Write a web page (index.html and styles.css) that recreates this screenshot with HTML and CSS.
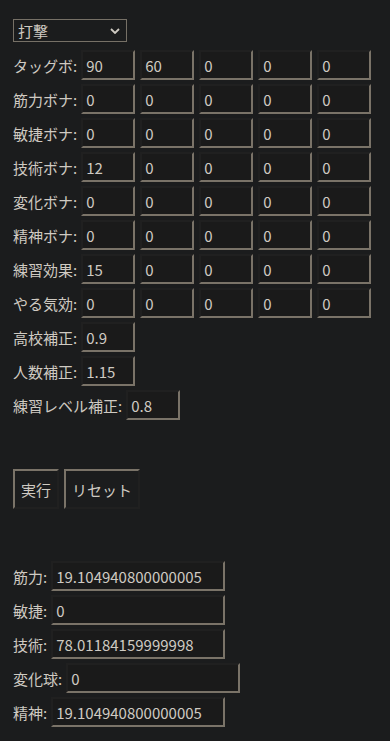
FILE: index.html
```html
<!DOCTYPE html>
<html lang="ja">

<head>
    <meta charset="UTF-8">
    <meta name="viewport" content="width=device-width, initial-scale=1.0">
    <title>練習計算</title>
    <link rel="stylesheet" href="styles.css">
</head>

<body>
    <div class="calc">
        <div class="type-select">
            <select id="type">
                <option>打撃</option>
                <option>投手</option>
            </select>
            <svg class="chevron" width="10" height="6" viewBox="0 0 10 6">
                <path d="M1 1 L5 5 L9 1" fill="none" stroke="#cfcac2" stroke-width="1.8" />
            </svg>
        </div>

        <div class="inputs">
            <div class="row">タッグボ:<input type="text" value="90"><input type="text" value="60"><input type="text" value="0"><input type="text" value="0"><input type="text" value="0"></div>
            <div class="row">筋力ボナ:<input type="text" value="0"><input type="text" value="0"><input type="text" value="0"><input type="text" value="0"><input type="text" value="0"></div>
            <div class="row">敏捷ボナ:<input type="text" value="0"><input type="text" value="0"><input type="text" value="0"><input type="text" value="0"><input type="text" value="0"></div>
            <div class="row">技術ボナ:<input type="text" value="12"><input type="text" value="0"><input type="text" value="0"><input type="text" value="0"><input type="text" value="0"></div>
            <div class="row">変化ボナ:<input type="text" value="0"><input type="text" value="0"><input type="text" value="0"><input type="text" value="0"><input type="text" value="0"></div>
            <div class="row">精神ボナ:<input type="text" value="0"><input type="text" value="0"><input type="text" value="0"><input type="text" value="0"><input type="text" value="0"></div>
            <div class="row">練習効果:<input type="text" value="15"><input type="text" value="0"><input type="text" value="0"><input type="text" value="0"><input type="text" value="0"></div>
            <div class="row">やる気効:<input type="text" value="0"><input type="text" value="0"><input type="text" value="0"><input type="text" value="0"><input type="text" value="0"></div>
            <div class="row">高校補正:<input type="text" value="0.9"></div>
            <div class="row">人数補正:<input type="text" value="1.15"></div>
            <div class="row">練習レベル補正:<input type="text" value="0.8"></div>
        </div>

        <div class="buttons">
            <button type="button">実行</button>
            <button type="button">リセット</button>
        </div>

        <div class="results">
            <div class="row">筋力:<input class="out" type="text" value="19.104940800000005" readonly></div>
            <div class="row">敏捷:<input class="out" type="text" value="0" readonly></div>
            <div class="row">技術:<input class="out" type="text" value="78.01184159999998" readonly></div>
            <div class="row">変化球:<input class="out" type="text" value="0" readonly></div>
            <div class="row">精神:<input class="out" type="text" value="19.104940800000005" readonly></div>
        </div>
    </div>
</body>

</html>
```

FILE: styles.css
```css
body {
    margin: 0;
    background-color: #1b1c1d;
    color: #cfcac2;
    font-family: "Noto Sans CJK JP", "Noto Sans", sans-serif;
    font-size: 15px;
}

.calc {
    padding: 19px 13px 0 13px;
}

.type-select {
    position: relative;
    width: 114px;
    margin-bottom: 8px;
}

select {
    appearance: none;
    width: 114px;
    height: 23px;
    padding: 0 0 0 4px;
    background-color: #1b1c1d;
    color: #cfcac2;
    border: 1px solid #767066;
    border-radius: 0;
    font-family: inherit;
    font-size: 15px;
}

.chevron {
    position: absolute;
    right: 7px;
    top: 9px;
    pointer-events: none;
}

.row {
    display: flex;
    align-items: center;
    gap: 5px;
    height: 30px;
    margin-bottom: 4px;
}

input[type="text"] {
    box-sizing: border-box;
    width: 54px;
    height: 30px;
    padding: 0 3px;
    background-color: #1a1a1a;
    color: #cfcac2;
    border: 2px solid;
    border-color: #202020 #7a7368 #7a7368 #202020;
    font-family: inherit;
    font-size: 15px;
}

.row input:first-of-type {
    margin-left: -1px;
}

.buttons {
    display: flex;
    gap: 5px;
    margin-top: 49px;
}

button {
    height: 40px;
    padding: 0 6px;
    background-color: #1b1c1d;
    color: #cfcac2;
    border: 2px solid;
    border-color: #7a7368 #202020 #202020 #7a7368;
    font-family: inherit;
    font-size: 15px;
}

.results {
    margin-top: 52px;
}

input.out {
    width: 174px;
}
```
